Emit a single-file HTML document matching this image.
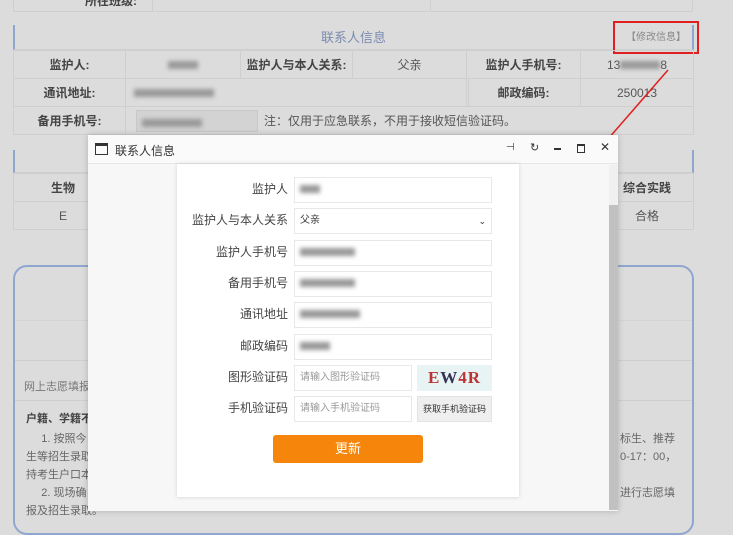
<!DOCTYPE html>
<html><head><meta charset="utf-8"><style>
*{box-sizing:border-box;margin:0;padding:0}
body{width:733px;height:515px;overflow:hidden;background:#dcdcdc;font-family:"Liberation Sans","Noto Sans CJK SC",sans-serif;position:relative;color:#555;font-size:12px}
.a{position:absolute}
.c{position:absolute;border:1px solid #cfcfcf;display:flex;align-items:center;justify-content:center}
.b{font-weight:bold;color:#444}
.lbl{position:absolute;right:445px;width:120px;text-align:right;font-size:12px;color:#444;line-height:24px}
.inp{position:absolute;left:294px;width:198px;height:26px;border:1px solid #e8e8e8;background:#fff;font-size:10px;color:#999;padding-left:5px;line-height:24px}
.blur{display:inline-block;height:8px;background:#999;filter:blur(2px);vertical-align:middle}
</style></head><body>
<!-- top row -->
<div class="a" style="left:13px;top:-12px;width:680px;height:24px;border:1px solid #cfcfcf"></div>
<div class="a" style="left:85px;top:-8px;font-weight:bold;color:#444">所在班级:</div>
<div class="a" style="left:152px;top:-12px;height:24px;border-left:1px solid #cfcfcf"></div>
<div class="a" style="left:430px;top:-12px;height:24px;border-left:1px solid #cfcfcf"></div>
<!-- section header -->
<div class="a" style="left:13px;top:25px;width:681px;height:25px;border-left:2px solid #8fa6cf;border-right:2px solid #8fa6cf;border-bottom:1px solid #cfcfcf;text-align:center;line-height:25px;font-size:13px;color:#7b8bb0">联系人信息</div>
<div class="a" style="left:613px;top:21px;width:86px;height:33px;border:2px solid #e02020;font-size:10px;color:#888;line-height:29px;text-align:center">【修改信息】</div>
<div class="c b" style="left:13px;top:50px;width:113px;height:29px">监护人:</div>
<div class="c" style="left:125px;top:50px;width:116px;height:29px"><span class="blur" style="width:30px"></span></div>
<div class="c b" style="left:240px;top:50px;width:113px;height:29px">监护人与本人关系:</div>
<div class="c" style="left:352px;top:50px;width:115px;height:29px">父亲</div>
<div class="c b" style="left:466px;top:50px;width:115px;height:29px">监护人手机号:</div>
<div class="c" style="left:580px;top:50px;width:114px;height:29px">13<span class="blur" style="width:40px"></span>8</div>
<div class="c b" style="left:13px;top:78px;width:113px;height:29px">通讯地址:</div>
<div class="c" style="left:125px;top:78px;width:344px;height:29px;justify-content:flex-start;padding-left:8px"><span class="blur" style="width:80px"></span></div>
<div class="c b" style="left:466px;top:78px;width:115px;height:29px">邮政编码:</div>
<div class="c" style="left:580px;top:78px;width:114px;height:29px">250013</div>
<div class="c b" style="left:13px;top:106px;width:113px;height:29px">备用手机号:</div>
<div class="c" style="left:125px;top:106px;width:569px;height:29px;justify-content:flex-start;padding-left:10px"><span style="display:inline-block;width:122px;height:22px;background:#d3d3d3;border:1px solid #c8c8c8;padding:5px"><span class="blur" style="width:60px"></span></span><span style="margin-left:6px">注：仅用于应急联系，不用于接收短信验证码。</span></div>
<!-- second section -->
<div class="a" style="left:13px;top:150px;width:681px;height:23px;border-left:2px solid #8fa6cf;border-right:2px solid #8fa6cf;border-bottom:1px solid #cfcfcf"></div>
<div class="c b" style="left:13px;top:173px;width:100px;height:29px">生物</div>
<div class="c" style="left:13px;top:201px;width:100px;height:29px">E</div>
<div class="c b" style="left:600px;top:173px;width:94px;height:29px">综合实践</div>
<div class="c" style="left:600px;top:201px;width:94px;height:29px">合格</div>
<!-- rounded box -->
<div class="a" style="left:13px;top:265px;width:681px;height:270px;border:2px solid #8fa6cf;border-radius:14px"></div>
<div class="a" style="left:15px;top:320px;width:677px;border-top:1px solid #d4d4d4"></div>
<div class="a" style="left:15px;top:360px;width:677px;border-top:1px solid #cfcfcf"></div>
<div class="a" style="left:15px;top:400px;width:677px;border-top:1px solid #cfcfcf"></div>
<div class="a" style="left:24px;top:378px;font-size:11px;color:#777">网上志愿填报</div>
<div class="a" style="left:26px;top:410px;font-size:11px;color:#444;font-weight:bold">户籍、学籍不</div>
<div class="a" style="left:26px;top:430px;font-size:11px;color:#666;line-height:18px">&nbsp;&nbsp;&nbsp;&nbsp;&nbsp;1. 按照今<br>生等招生录取<br>持考生户口本<br>&nbsp;&nbsp;&nbsp;&nbsp;&nbsp;2. 现场确<br>报及招生录取。</div>
<div class="a" style="left:620px;top:430px;font-size:11px;color:#666;line-height:18px">标生、推荐<br>0-17：00，<br><br>进行志愿填</div>
<!-- red arrow -->
<svg class="a" style="left:0;top:0" width="733" height="515"><line x1="668" y1="70" x2="588" y2="162" stroke="#e02020" stroke-width="1.5"/><polygon points="582,169 586,155 594,161" fill="#e02020"/></svg>
<!-- modal -->
<div class="a" style="left:88px;top:135px;width:530px;height:376px;background:#f7f7f7;box-shadow:0 0 6px rgba(0,0,0,.2)">
 <div class="a" style="left:0;top:0;width:530px;height:29px;background:#fafafa;border-bottom:1px solid #e6e6e6">
  <div class="a" style="left:7px;top:8px;width:13px;height:12px;border:1.5px solid #333;border-top-width:3px"></div>
  <div class="a" style="left:27px;top:7px;font-size:12px;color:#333">联系人信息</div>
  <div class="a" style="left:418px;top:7px;font-size:10px;color:#333">⊣</div>
  <div class="a" style="left:442px;top:6px;font-size:11px;color:#333">↻</div>
  <div class="a" style="left:466px;top:13px;width:7px;height:2px;background:#333"></div>
  <div class="a" style="left:489px;top:9px;width:8px;height:9px;border:1.5px solid #333;border-top-width:2.5px"></div>
  <div class="a" style="left:512px;top:5px;font-size:12px;color:#333">✕</div>
 </div>
 <div class="a" style="left:521px;top:30px;width:9px;height:345px;background:#f0f0f0"></div>
 <div class="a" style="left:521px;top:70px;width:9px;height:305px;background:#c1c1c1"></div>
 <div class="a" style="left:89px;top:29px;width:342px;height:333px;background:#fff;box-shadow:0 0 4px rgba(0,0,0,.15)"></div>
</div>
<div class="lbl" style="top:177px">监护人</div><div class="inp" style="top:177px"><span class="blur" style="width:20px"></span></div>
<div class="lbl" style="top:208px">监护人与本人关系</div><div class="inp" style="top:208px;color:#333">父亲<span style="position:absolute;right:5px;font-size:9px">⌄</span></div>
<div class="lbl" style="top:240px">监护人手机号</div><div class="inp" style="top:240px"><span class="blur" style="width:55px"></span></div>
<div class="lbl" style="top:271px">备用手机号</div><div class="inp" style="top:271px"><span class="blur" style="width:55px"></span></div>
<div class="lbl" style="top:302px">通讯地址</div><div class="inp" style="top:302px"><span class="blur" style="width:60px"></span></div>
<div class="lbl" style="top:334px">邮政编码</div><div class="inp" style="top:334px"><span class="blur" style="width:30px"></span></div>
<div class="lbl" style="top:365px">图形验证码</div><div class="inp" style="top:365px;width:118px">请输入图形验证码</div>
<div class="a" style="left:417px;top:365px;width:75px;height:26px;background:#e8f4f4;font-family:'Liberation Serif',serif;font-weight:bold;font-size:17px;color:#b33;text-align:center;line-height:26px;letter-spacing:1px">E<span style="color:#335">W</span>4R</div>
<div class="lbl" style="top:396px">手机验证码</div><div class="inp" style="top:396px;width:118px">请输入手机验证码</div>
<div class="a" style="left:417px;top:396px;width:75px;height:26px;background:#efefef;border:1px solid #e3e3e3;font-size:9px;color:#333;text-align:center;line-height:24px">获取手机验证码</div>
<div class="a" style="left:273px;top:435px;width:150px;height:28px;background:#f5860b;border-radius:3px;color:#fff;font-size:13px;text-align:center;line-height:28px">更新</div>
</body></html>
